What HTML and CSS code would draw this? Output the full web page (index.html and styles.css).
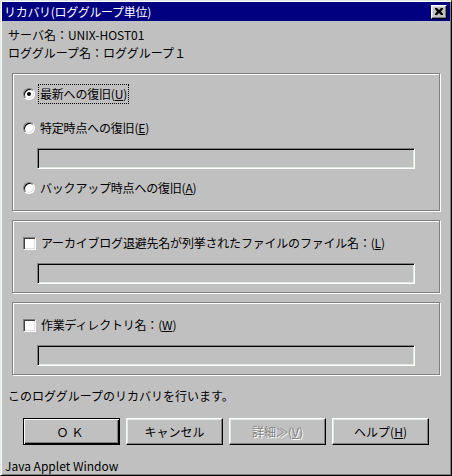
FILE: index.html
```html
<!DOCTYPE html>
<html lang="ja">
<head>
    <meta charset="UTF-8">
    <title>リカバリ(ロググループ単位)</title>
    <link rel="stylesheet" href="styles.css">
</head>
<body>
    <div class="window">
        <!-- Title bar -->
        <div class="titlebar">
            <span class="title">リカバリ(ロググループ単位)</span>
            <span class="close">
                <svg width="8" height="7" viewBox="0 0 8 7">
                    <path d="M0 0h2l2 2 2-2h2v1L6 3.5 8 6v1H6L4 5 2 7H0V6l2-2.5L0 1z" fill="#000"/>
                </svg>
            </span>
        </div>

        <!-- Target info -->
        <div class="info">
            <p>サーバ名：UNIX-HOST01</p>
            <p>ロググループ名：ロググループ１</p>
        </div>

        <!-- Recovery point -->
        <div class="panel panel-point">
            <div class="row first">
                <span class="radio checked"></span>
                <span class="label focus">最新への復旧(<u>U</u>)</span>
            </div>
            <div class="row second">
                <span class="radio"></span>
                <span class="label">特定時点への復旧(<u>E</u>)</span>
            </div>
            <div class="field"></div>
            <div class="row third">
                <span class="radio"></span>
                <span class="label">バックアップ時点への復旧(<u>A</u>)</span>
            </div>
        </div>

        <!-- Archive log list -->
        <div class="panel panel-opt">
            <div class="row">
                <span class="check"></span>
                <span class="label">アーカイブログ退避先名が列挙されたファイルのファイル名：(<u>L</u>)</span>
            </div>
            <div class="field"></div>
        </div>

        <!-- Work directory -->
        <div class="panel panel-opt">
            <div class="row">
                <span class="check"></span>
                <span class="label">作業ディレクトリ名：(<u>W</u>)</span>
            </div>
            <div class="field"></div>
        </div>

        <p class="status">このロググループのリカバリを行います。</p>

        <!-- Buttons -->
        <div class="buttons">
            <button class="btn default">ＯＫ</button>
            <button class="btn">キャンセル</button>
            <button class="btn" disabled>詳細≫(<u>V</u>)</button>
            <button class="btn">ヘルプ(<u>H</u>)</button>
        </div>

        <p class="applet">Java Applet Window</p>
    </div>
</body>
</html>
```

FILE: styles.css
```css
/* Global */
body {
    margin: 0;
    font-family: "Noto Sans CJK JP", "DejaVu Sans", sans-serif;
    font-size: 12px;
    color: #000;
    background: #c0c0c0;
}

p {
    margin: 0;
}

u {
    text-decoration: underline;
    text-underline-offset: 1px;
}

/* Window frame */
.window {
    box-sizing: border-box;
    width: 452px;
    height: 476px;
    background: #c0c0c0;
    border-style: solid;
    border-width: 1px;
    border-color: #dfe8df #000 #000 #dfe8df;
    box-shadow: inset 1px 1px 0 #fff, inset -1px -1px 0 #808080;
    padding: 1px;
}

/* Title bar */
.titlebar {
    height: 19px;
    background: #000080;
    color: #fff;
    display: flex;
    align-items: center;
    justify-content: space-between;
    padding: 0 3px 0 2px;
}

.title {
    line-height: 19px;
    letter-spacing: -0.3px;
}

.close {
    box-sizing: border-box;
    width: 16px;
    height: 14px;
    background: #c0c0c0;
    border-style: solid;
    border-width: 1px;
    border-color: #fff #000 #000 #fff;
    box-shadow: inset -1px -1px 0 #808080, inset 1px 1px 0 #dfdfdf;
    display: flex;
    align-items: center;
    justify-content: center;
}

/* Info lines */
.info {
    padding: 5px 0 0 6px;
}

.info p {
    line-height: 18px;
}

/* Etched panels */
.panel {
    box-sizing: border-box;
    width: 428px;
    margin-left: 10px;
    border: 1px solid #808080;
    box-shadow: 1px 1px 0 #fff, inset 1px 1px 0 #fff;
    padding-left: 9px;
}

.panel-point {
    margin-top: 11px;
    padding-top: 8px;
    padding-bottom: 10px;
}

.panel-opt {
    margin-top: 9px;
    padding-top: 10px;
    padding-bottom: 8px;
}

.row {
    height: 24px;
    display: flex;
    align-items: center;
}

.panel-point .second {
    margin-top: 10px;
}

.panel-point .third {
    margin-top: 7px;
}

.label {
    margin-left: 4px;
    line-height: 16px;
    padding: 0 1px;
    letter-spacing: -0.2px;
}

.label.focus {
    outline: 1px dotted #000;
    outline-offset: 0;
    padding: 1px 1px;
}

/* Radio button */
.radio {
    box-sizing: border-box;
    width: 12px;
    height: 12px;
    margin-left: 1px;
    border-radius: 50%;
    background: #fff;
    border-style: solid;
    border-width: 1px;
    border-color: #808080 #fff #fff #808080;
    box-shadow: inset 1px 1px 0 #000, inset -1px -1px 0 #dfdfdf;
    position: relative;
}

.radio.checked::after {
    content: "";
    position: absolute;
    left: 3px;
    top: 3px;
    width: 4px;
    height: 4px;
    border-radius: 50%;
    background: #000;
}

/* Checkbox */
.check {
    box-sizing: border-box;
    width: 13px;
    height: 13px;
    margin-left: 1px;
    background: #fff;
    border-style: solid;
    border-width: 1px;
    border-color: #808080 #fff #fff #808080;
    box-shadow: inset 1px 1px 0 #404040, inset -1px -1px 0 #dfdfdf;
}

/* Text fields (disabled) */
.field {
    box-sizing: border-box;
    width: 378px;
    height: 21px;
    margin-left: 15px;
    margin-top: 8px;
    background: #c0c0c0;
    border-style: solid;
    border-width: 1px;
    border-color: #808080 #fff #fff #808080;
    box-shadow: inset 1px 1px 0 #000, inset -1px -1px 0 #dfe8df;
}

.panel-opt .field {
    margin-top: 8px;
}

/* Status line */
.status {
    margin: 12px 0 0 6px;
    line-height: 18px;
}

/* Buttons */
.buttons {
    display: flex;
    justify-content: center;
    gap: 6px;
    margin-top: 13px;
}

.btn {
    box-sizing: border-box;
    width: 97px;
    height: 27px;
    padding: 0;
    font-family: inherit;
    font-size: 12px;
    color: #000;
    background: #c0c0c0;
    border-style: solid;
    border-width: 1px;
    border-color: #fff #000 #000 #fff;
    box-shadow: inset -1px -1px 0 #808080, inset 1px 1px 0 #dfe8df;
}

.btn.default {
    border-color: #000;
    box-shadow: inset 1px 1px 0 #fff, inset -1px -1px 0 #000, inset -2px -2px 0 #808080;
    letter-spacing: 3px;
}

.btn:disabled {
    color: #808080;
    text-shadow: 1px 1px 0 #fff;
}

/* Footer */
.applet {
    margin: 13px 0 0 3px;
    line-height: 16px;
}
```
